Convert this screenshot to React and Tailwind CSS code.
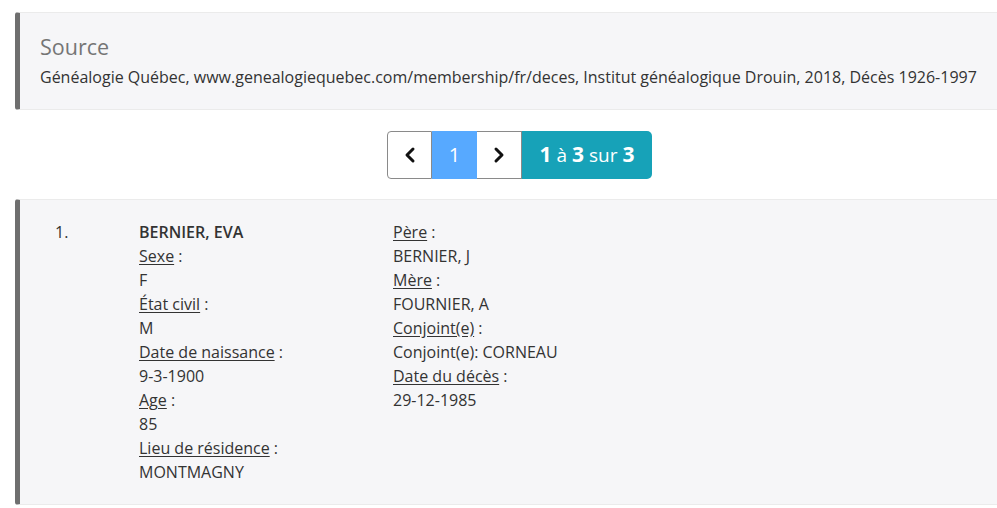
import React from 'react';

const font = { fontFamily: '"Open Sans", "Liberation Sans", sans-serif' };

const Field = ({ label, value }) => (
    <>
        <div>
            <span className="underline underline-offset-2">{label}</span> :
        </div>
        <div>{value}</div>
    </>
);

const ChevronLeft = () => (
    <svg width="14" height="18" viewBox="0 0 14 18" fill="none">
        <path d="M10 3 L4 9 L10 15" stroke="#111" strokeWidth="3" strokeLinecap="round" strokeLinejoin="round" />
    </svg>
);

const ChevronRight = () => (
    <svg width="14" height="18" viewBox="0 0 14 18" fill="none">
        <path d="M4 3 L10 9 L4 15" stroke="#111" strokeWidth="3" strokeLinecap="round" strokeLinejoin="round" />
    </svg>
);

const App = () => {
    return (
        <div className="min-h-[508px] bg-white pt-3 pl-[15px] text-[#333]" style={font}>
            {/* Source */}
            <div className="flex h-[98px] flex-col border-y border-[#ebebeb] border-l-[5px] border-l-[#6f6f6f] rounded-l-[3px] bg-[#f6f6f8] pl-5 pt-[20px]">
                <div className="text-[21.5px] leading-7 text-[#757575]">Source</div>
                <div className="mt-[4px] text-[16px] leading-6 whitespace-nowrap">
                    Généalogie Québec, www.genealogiequebec.com/membership/fr/deces, Institut généalogique Drouin, 2018, Décès 1926-1997
                </div>
            </div>

            {/* Pagination */}
            <div className="flex justify-center pl-[27px] pt-[21px] pb-5">
                <div className="flex h-[48px]">
                    <button className="flex w-[45px] items-center justify-center rounded-l-[4px] border border-[#8a8a8a] bg-white">
                        <ChevronLeft />
                    </button>
                    <button className="flex w-[45px] items-center justify-center bg-[#57a9ff] text-[20px] text-white">1</button>
                    <button className="flex w-[45px] items-center justify-center border border-[#8a8a8a] border-l-0 bg-white">
                        <ChevronRight />
                    </button>
                    <div className="flex w-[130px] items-center justify-center gap-[5px] rounded-r-[5px] bg-[#17a2b8] text-white">
                        <span className="text-[21px] font-bold">1</span>
                        <span className="text-[19px]">à</span>
                        <span className="text-[21px] font-bold">3</span>
                        <span className="text-[19px]">sur</span>
                        <span className="text-[21px] font-bold">3</span>
                    </div>
                </div>
            </div>

            {/* Record */}
            <div className="flex h-[306px] border-y border-[#ebebeb] border-l-[5px] border-l-[#6f6f6f] rounded-l-[3px] bg-[#f6f6f8] pt-[20px] text-[16px] leading-6">
                <div className="w-[119px] pl-[35px]">1.</div>
                <div className="w-[254px]">
                    <div className="font-semibold">BERNIER, EVA</div>
                    <Field label="Sexe" value="F" />
                    <Field label="État civil" value="M" />
                    <Field label="Date de naissance" value="9-3-1900" />
                    <Field label="Age" value="85" />
                    <Field label="Lieu de résidence" value="MONTMAGNY" />
                </div>
                <div>
                    <Field label="Père" value="BERNIER, J" />
                    <Field label="Mère" value="FOURNIER, A" />
                    <Field label="Conjoint(e)" value="Conjoint(e): CORNEAU" />
                    <Field label="Date du décès" value="29-12-1985" />
                </div>
            </div>
        </div>
    );
};

export default App;
